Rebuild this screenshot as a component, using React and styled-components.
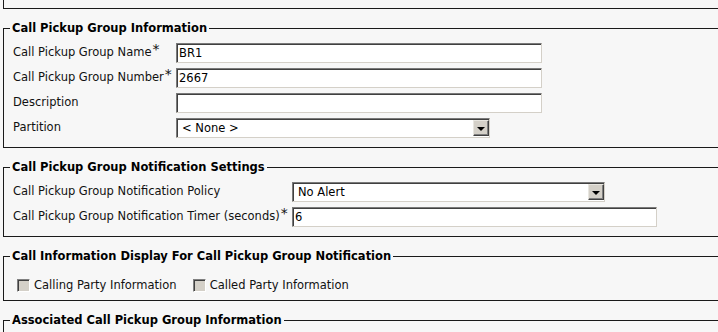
import React from 'react';
import styled, { createGlobalStyle } from 'styled-components';

const GlobalStyle = createGlobalStyle`
  html, body {
    margin: 0;
    padding: 0;
    background: #f7f7f7;
    overflow: hidden;
  }
  body {
    font-family: "DejaVu Sans", Verdana, sans-serif;
    font-size: 11.5px;
    color: #111;
  }
`;

const Page = styled.div`
  width: 760px;
  padding-left: 3px;
  display: flex;
  flex-direction: column;
  gap: 10px;
`;

// the end of the section above, cut off by the top of the window
const ClippedSection = styled.div`
  height: 8px;
  border: 1px solid #1a1a1a;
  border-top: none;
`;

const Section = styled.fieldset`
  margin: 0;
  padding: ${p => p.$top ?? 6}px 9px ${p => p.$bottom ?? 9}px;
  border: 1px solid #1a1a1a;
  min-width: 0;
`;

const Legend = styled.legend`
  margin-left: -3px;
  padding: 0 2px;
  font-weight: bold;
  font-size: 11.5px;
  line-height: 18px;
  color: #000;
`;

const Rows = styled.div`
  display: grid;
  grid-template-columns: ${p => p.$label}px auto;
  row-gap: 5px;
  justify-items: start;
`;

const Label = styled.div`
  line-height: 14px;
  padding-top: 2px;
  white-space: nowrap;
`;

const Req = styled.span`
  font-size: 14px;
  vertical-align: top;
  position: relative;
  top: -3px;
  margin-left: 1px;
`;

const TextBox = styled.div`
  box-sizing: border-box;
  width: ${p => p.$w}px;
  height: 20px;
  background: #fff;
  border: 1px solid;
  border-color: #7a7a7a #d4d0c8 #d4d0c8 #7a7a7a;
  box-shadow: inset 1px 1px 0 #404040;
  padding: 0 0 0 2px;
  line-height: 18px;
  font-size: 11.5px;
  color: #000;
  white-space: nowrap;
`;

const SelectBox = styled(TextBox)`
  display: flex;
  align-items: stretch;
  justify-content: space-between;
  padding-left: 5px;
`;

const DropButton = styled.span`
  box-sizing: border-box;
  width: 16px;
  margin: 1px 0;
  background: #d4d0c8;
  border: 1px solid;
  border-color: #e8e6e0 #404040 #404040 #e8e6e0;
  box-shadow: inset -1px -1px 0 #808080;
  display: flex;
  align-items: center;
  justify-content: center;

  &::after {
    content: "";
    border-left: 4px solid transparent;
    border-right: 4px solid transparent;
    border-top: 4px solid #000;
    margin-top: 1px;
  }
`;

const CheckRow = styled.div`
  display: flex;
  align-items: center;
  gap: 16px;
  padding-left: 4px;
`;

const CheckItem = styled.label`
  display: flex;
  align-items: center;
  gap: 4px;
  white-space: nowrap;
`;

const CheckBox = styled.span`
  box-sizing: border-box;
  width: 13px;
  height: 13px;
  background: #d4d0c8;
  border: 1px solid;
  border-color: #808080 #fff #fff #808080;
  box-shadow: inset 1px 1px 0 #404040;
`;

const Select = ({ w, children }) => (
  <SelectBox $w={w}>
    <span>{children}</span>
    <DropButton />
  </SelectBox>
);

const Field = ({ label, required, children }) => (
  <>
    <Label>
      {label}
      {required && <Req>*</Req>}
    </Label>
    {children}
  </>
);

export default function App() {
  return (
    <Page>
      <GlobalStyle />
      <ClippedSection />

      <Section>
        <Legend>Call Pickup Group Information</Legend>
        <Rows $label={163}>
          <Field label="Call Pickup Group Name" required>
            <TextBox $w={366}>BR1</TextBox>
          </Field>
          <Field label="Call Pickup Group Number" required>
            <TextBox $w={366}>2667</TextBox>
          </Field>
          <Field label="Description">
            <TextBox $w={366} />
          </Field>
          <Field label="Partition">
            <Select w={314}>&lt; None &gt;</Select>
          </Field>
        </Rows>
      </Section>

      <Section>
        <Legend>Call Pickup Group Notification Settings</Legend>
        <Rows $label={279}>
          <Field label="Call Pickup Group Notification Policy">
            <Select w={313}>No Alert</Select>
          </Field>
          <Field label="Call Pickup Group Notification Timer (seconds)" required>
            <TextBox $w={365}>6</TextBox>
          </Field>
        </Rows>
      </Section>

      <Section $top={13} $bottom={8}>
        <Legend>Call Information Display For Call Pickup Group Notification</Legend>
        <CheckRow>
          <CheckItem>
            <CheckBox />
            Calling Party Information
          </CheckItem>
          <CheckItem>
            <CheckBox />
            Called Party Information
          </CheckItem>
        </CheckRow>
      </Section>

      <Section>
        <Legend>Associated Call Pickup Group Information</Legend>
        <Rows $label={163} />
      </Section>
    </Page>
  );
}
